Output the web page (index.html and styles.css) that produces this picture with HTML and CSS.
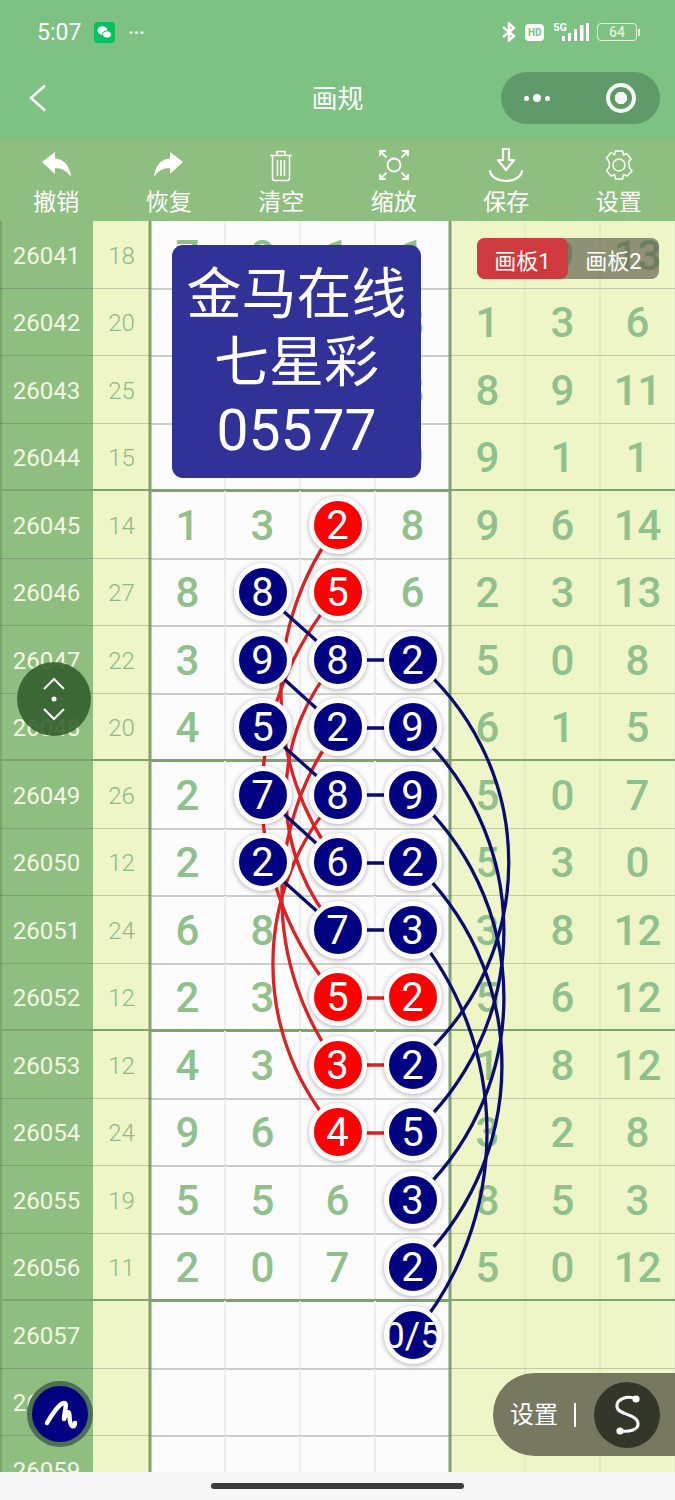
FILE: index.html
```html
<!DOCTYPE html>
<html lang="zh">
<head>
<meta charset="utf-8">
<title>画规</title>
<link rel="stylesheet" href="styles.css">
</head>
<body>
<div class="phone">
  <header class="status">
    <div class="status-left">
      <span class="time">5:07</span>
      <svg class="wechat" viewBox="0 0 21 21"><rect width="21" height="21" rx="4" fill="#07c160"/><ellipse cx="8.5" cy="8.5" rx="5" ry="4.2" fill="#fff"/><ellipse cx="13" cy="12.5" rx="4.4" ry="3.6" fill="#fff" stroke="#07c160"/></svg>
      <span class="more">···</span>
    </div>
    <div class="status-right">
      <svg class="bt" viewBox="0 0 16 20"><path d="M2 5 13 14 8 18.500V1.500L13 6 2 15" fill="none" stroke="#fff" stroke-width="2.400"/></svg>
      <span class="hd">HD</span>
      <span class="net"><span class="fiveg">5G</span>
        <svg class="bars" viewBox="0 0 27 20"><g fill="#fff"><rect x="0" y="14" width="3" height="5"/><rect x="6" y="11" width="3" height="8"/><rect x="12" y="7" width="3" height="12"/><rect x="18" y="3" width="3.500" height="16"/><rect x="24" y="1" width="3" height="18"/></g></svg>
      </span>
      <span class="battery"><span class="batt-body">64</span><span class="batt-tip"></span></span>
    </div>
  </header>
  <nav class="nav">
    <svg class="back" viewBox="0 0 18 28"><path d="M16 1.500 2 14l14 12.500" fill="none" stroke="#fff" stroke-width="2.600"/></svg>
    <h1 class="title">画规</h1>
    <div class="capsule">
      <span class="dots"><i class="dot"></i><i class="dot big"></i><i class="dot"></i></span>
      <span class="target"></span>
    </div>
  </nav>
  <div class="toolbar">
    <div class="tool">
      <svg class="ico" viewBox="0 0 36 36"><path d="M4 15 17 5v6.500C27 12 32 20 33 30c-4-6-9-9-16-9v6z" fill="#fff"/></svg>
      <span>撤销</span>
    </div>
    <div class="tool">
      <svg class="ico" viewBox="0 0 36 36"><path d="M32 15 19 5v6.500C9 12 4 20 3 30c4-6 9-9 16-9v6z" fill="#fff"/></svg>
      <span>恢复</span>
    </div>
    <div class="tool">
      <svg class="ico" viewBox="0 0 36 36"><g fill="none" stroke="#fff" stroke-width="1.500"><path d="M7 8.500h22M14 8V4.500h8V8"/><path d="M9.500 9v22c0 1.500 1 2.500 2.500 2.500h12c1.500 0 2.500-1 2.500-2.500V9"/><path d="M14.500 13v16M18 13v16M21.500 13v16"/></g></svg>
      <span>清空</span>
    </div>
    <div class="tool">
      <svg class="ico" viewBox="0 0 36 36"><g fill="none" stroke="#fff" stroke-width="1.800"><circle cx="18" cy="18" r="6.500"/><path d="M4 9V4h6M4.500 4.500l6 6M32 9V4h-6M31.500 4.500l-6 6M4 27v5h6M4.500 31.500l6-6M32 27v5h-6M31.500 31.500l-6-6"/></g></svg>
      <span>缩放</span>
    </div>
    <div class="tool">
      <svg class="ico ico-save" viewBox="0 0 36 36"><g fill="none" stroke="#fff" stroke-width="2.200" stroke-linejoin="round" stroke-linecap="round"><path d="M15 2h6v11h5L18 23 10 13h5z"/><path d="M2 24c1 6 8 10 16 10s15-4 16-10"/></g></svg>
      <span>保存</span>
    </div>
    <div class="tool">
      <svg class="ico" viewBox="0 0 36 36"><g fill="none" stroke="#fff" stroke-width="1.500" stroke-linejoin="round"><path d="M14.500 4h7l1 4 3-1.500 4.500 5.500-2.500 3 .5 3 .5 3 2.500 3L26 29l-3.500-1.500-1 4.500h-7l-1-4.500L10 29l-4.500-5.500 2.500-3 .5-3-.5-3L5.500 11 10 5.500 13.500 8z"/><circle cx="18" cy="18" r="6"/></g></svg>
      <span>设置</span>
    </div>
  </div>

  <main class="sheet">
    <div class="row"><div class="id">26041</div><div class="sum">18</div><div class="n">7</div><div class="n">8</div><div class="n">1</div><div class="n l4">1</div><div class="n r5">2</div><div class="n">9</div><div class="n">13</div></div>
    <div class="row"><div class="id">26042</div><div class="sum">20</div><div class="n">5</div><div class="n">2</div><div class="n">4</div><div class="n l4">8</div><div class="n r5">1</div><div class="n">3</div><div class="n">6</div></div>
    <div class="row"><div class="id">26043</div><div class="sum">25</div><div class="n">2</div><div class="n">3</div><div class="n">1</div><div class="n l4">8</div><div class="n r5">8</div><div class="n">9</div><div class="n">11</div></div>
    <div class="row thick"><div class="id">26044</div><div class="sum">15</div><div class="n">1</div><div class="n">2</div><div class="n">3</div><div class="n l4">9</div><div class="n r5">9</div><div class="n">1</div><div class="n">1</div></div>
    <div class="row"><div class="id">26045</div><div class="sum">14</div><div class="n">1</div><div class="n">3</div><div class="n"><b class="ball red">2</b></div><div class="n l4">8</div><div class="n r5">9</div><div class="n">6</div><div class="n">14</div></div>
    <div class="row"><div class="id">26046</div><div class="sum">27</div><div class="n">8</div><div class="n"><b class="ball">8</b></div><div class="n"><b class="ball red">5</b></div><div class="n l4">6</div><div class="n r5">2</div><div class="n">3</div><div class="n">13</div></div>
    <div class="row"><div class="id">26047</div><div class="sum">22</div><div class="n">3</div><div class="n"><b class="ball">9</b></div><div class="n"><b class="ball">8</b></div><div class="n l4"><b class="ball">2</b></div><div class="n r5">5</div><div class="n">0</div><div class="n">8</div></div>
    <div class="row thick"><div class="id">26048</div><div class="sum">20</div><div class="n">4</div><div class="n"><b class="ball">5</b></div><div class="n"><b class="ball">2</b></div><div class="n l4"><b class="ball">9</b></div><div class="n r5">6</div><div class="n">1</div><div class="n">5</div></div>
    <div class="row"><div class="id">26049</div><div class="sum">26</div><div class="n">2</div><div class="n"><b class="ball">7</b></div><div class="n"><b class="ball">8</b></div><div class="n l4"><b class="ball">9</b></div><div class="n r5">5</div><div class="n">0</div><div class="n">7</div></div>
    <div class="row"><div class="id">26050</div><div class="sum">12</div><div class="n">2</div><div class="n"><b class="ball">2</b></div><div class="n"><b class="ball">6</b></div><div class="n l4"><b class="ball">2</b></div><div class="n r5">5</div><div class="n">3</div><div class="n">0</div></div>
    <div class="row"><div class="id">26051</div><div class="sum">24</div><div class="n">6</div><div class="n">8</div><div class="n"><b class="ball">7</b></div><div class="n l4"><b class="ball">3</b></div><div class="n r5">3</div><div class="n">8</div><div class="n">12</div></div>
    <div class="row thick"><div class="id">26052</div><div class="sum">12</div><div class="n">2</div><div class="n">3</div><div class="n"><b class="ball red">5</b></div><div class="n l4"><b class="ball red">2</b></div><div class="n r5">5</div><div class="n">6</div><div class="n">12</div></div>
    <div class="row"><div class="id">26053</div><div class="sum">12</div><div class="n">4</div><div class="n">3</div><div class="n"><b class="ball red">3</b></div><div class="n l4"><b class="ball">2</b></div><div class="n r5">1</div><div class="n">8</div><div class="n">12</div></div>
    <div class="row"><div class="id">26054</div><div class="sum">24</div><div class="n">9</div><div class="n">6</div><div class="n"><b class="ball red">4</b></div><div class="n l4"><b class="ball">5</b></div><div class="n r5">3</div><div class="n">2</div><div class="n">8</div></div>
    <div class="row"><div class="id">26055</div><div class="sum">19</div><div class="n">5</div><div class="n">5</div><div class="n">6</div><div class="n l4"><b class="ball">3</b></div><div class="n r5">8</div><div class="n">5</div><div class="n">3</div></div>
    <div class="row thick"><div class="id">26056</div><div class="sum">11</div><div class="n">2</div><div class="n">0</div><div class="n">7</div><div class="n l4"><b class="ball">2</b></div><div class="n r5">5</div><div class="n">0</div><div class="n">12</div></div>
    <div class="row"><div class="id">26057</div><div class="sum"></div><div class="n"></div><div class="n"></div><div class="n"></div><div class="n l4"><b class="ball small">0/5</b></div><div class="n r5"></div><div class="n"></div><div class="n"></div></div>
    <div class="row"><div class="id">26058</div><div class="sum"></div><div class="n"></div><div class="n"></div><div class="n"></div><div class="n l4"></div><div class="n r5"></div><div class="n"></div><div class="n"></div></div>
    <div class="row"><div class="id">26059</div><div class="sum"></div><div class="n"></div><div class="n"></div><div class="n"></div><div class="n l4"></div><div class="n r5"></div><div class="n"></div><div class="n"></div></div>

    <svg class="links" viewBox="0 221 675 1251" width="675" height="1251">
      <g class="link-red">
        <path d="M338 525A279 279 0 0 0 338 863"/>
        <path d="M338 593A308 308 0 0 0 338 998"/>
        <path d="M338 660A201 201 0 0 0 338 930"/>
        <path d="M338 728A281 281 0 0 0 338 1065"/>
        <path d="M338 795A252 252 0 0 0 338 1133"/>
        <path d="M338 998H413M338 1065H413M338 1133H413"/>
      </g>
      <g class="link-navy">
        <path d="M413 660A262 262 0 0 1 413 1065"/>
        <path d="M413 728A271 271 0 0 1 413 1133"/>
        <path d="M413 795A271 271 0 0 1 413 1200"/>
        <path d="M413 863A275 275 0 0 1 413 1268"/>
        <path d="M413 930A314 314 0 0 1 413 1335"/>
        <path d="M263 593 338 660M263 660 338 728M263 728 338 795M263 795 338 863M263 863 338 930"/>
        <path d="M338 660H413M338 728H413M338 795H413M338 863H413M338 930H413"/>
      </g>
    </svg>

    <div class="banner">
      <div>金马在线</div>
      <div>七星彩</div>
      <div class="banner-num">05577</div>
    </div>
    <div class="boards"><span class="board active">画板1</span><span class="board">画板2</span></div>
    <div class="scroller">
      <svg viewBox="0 0 36 50" width="36" height="50"><g fill="none" stroke="#fff" stroke-width="2"><path d="M8 15 18 5l10 10M8 35l10 10 10-10"/></g><circle cx="18" cy="25" r="2.500" fill="#fff"/></svg>
    </div>
    <div class="brush">
      <svg viewBox="0 0 56 56" width="56" height="56"><path d="M15 37C20 28 28 17 32 17c4 0 0 9 0 16 2-6 4-8 5-6 1 3 0 11 3 13 2 1 3-1 3-3" fill="none" stroke="#fff" stroke-width="4.500" stroke-linecap="round" stroke-linejoin="round"/></svg>
    </div>
    <div class="pill">
      <span class="pill-label">设置</span>
      <i class="pill-bar"></i>
      <span class="pill-btn">
        <svg viewBox="0 0 40 50" width="40" height="50"><path d="M30 9C20 5 9 9 10 17c1 8 20 7 21 16 1 7-9 9-17 8" fill="none" stroke="#fff" stroke-width="3"/><circle cx="29" cy="9" r="3.600" fill="#fff"/><circle cx="13" cy="41" r="3.600" fill="#fff"/></svg>
      </span>
    </div>
  </main>

  <footer class="home"><i class="home-bar"></i></footer>
</div>
</body>
</html>
```
FILE: styles.css
```css
* { box-sizing: border-box; }
html, body { margin: 0; padding: 0; }
body {
  width: 675px;
  height: 1500px;
  overflow: hidden;
  font-family: Roboto, "Noto Sans CJK SC", sans-serif;
  background: #f6f6f6;
}
.phone { display: flex; flex-direction: column; height: 1500px; }

/* status bar */
.status {
  height: 68px;
  flex: none;
  background: #7dc183;
  color: #fff;
  display: flex;
  justify-content: space-between;
  align-items: center;
  padding: 0 35px 4px 37px;
}
.status-left { display: flex; align-items: center; gap: 13px; }
.time { font-size: 23px; }
.wechat { width: 21px; height: 21px; }
.more { font-size: 18px; font-weight: 700; letter-spacing: 0; }
.status-right { display: flex; align-items: center; }
.bt { width: 16px; height: 20px; margin-right: 8px; }
.hd {
  width: 19px; height: 17px;
  background: #fff; color: #7dc183;
  border-radius: 4px;
  font-size: 10px; font-weight: 700;
  display: flex; align-items: center; justify-content: center;
  margin-right: 9px;
}
.net { display: flex; align-items: flex-end; position: relative; margin-right: 8px; }
.fiveg { font-size: 11px; font-weight: 700; margin-right: -5px; align-self: flex-start; line-height: 11px; }
.bars { width: 27px; height: 20px; }
.battery { display: flex; align-items: center; }
.batt-body {
  width: 40px; height: 18px;
  border: 1.500px solid #e3efd8;
  border-radius: 4px;
  color: #e3efd8;
  font-size: 14px; font-weight: 500;
  display: flex; align-items: center; justify-content: center;
  line-height: 1;
}
.batt-tip { width: 2px; height: 7px; background: #e3efd8; margin-left: 1px; }

/* nav */
.nav {
  height: 69px;
  flex: none;
  background: #7dc183;
  display: grid;
  grid-template-columns: 1fr auto 1fr;
  align-items: center;
  padding: 0 15px 9px 15px;
}
.back { width: 18px; height: 28px; margin-left: 14px; }
.title { margin: -3px 0 0; font-size: 26px; font-weight: 400; color: #fff; line-height: 1; font-family: "Noto Sans CJK SC", sans-serif; }
.capsule {
  justify-self: end;
  width: 159px; height: 52px;
  border-radius: 26px;
  background: #5f9b68;
  display: flex; align-items: center; justify-content: space-between;
  padding: 0 24px 0 23px;
}
.dots { display: flex; align-items: center; gap: 4px; }
.dot { width: 5px; height: 5px; border-radius: 50%; background: #fff; }
.dot.big { width: 8px; height: 8px; }
.target {
  width: 30px; height: 30px;
  border-radius: 50%;
  border: 4px solid #f4f8f0;
  display: flex; align-items: center; justify-content: center;
  background: radial-gradient(circle, #f4f8f0 0 6px, transparent 6.500px);
}

/* toolbar */
.toolbar {
  height: 84px;
  flex: none;
  background: #8fbf80;
  display: grid;
  grid-template-columns: repeat(6, 1fr);
  box-shadow: inset 0 1px 0 #86ba7f;
}
.tool {
  display: flex; flex-direction: column; align-items: center;
  padding-top: 10px;
  color: #fff;
  font-size: 23px; line-height: 30px;
  font-family: "Noto Sans CJK SC", sans-serif;
}
.tool span { margin-top: 2px; }
.ico { width: 36px; height: 36px; display: block; }

/* sheet */
.sheet {
  height: 1251px;
  flex: none;
  position: relative;
  overflow: hidden;
  background: #fcfcfc;
}
.row {
  height: 67.500px;
  display: grid;
  grid-template-columns: 93px 57px repeat(7, 75px);
  position: relative;
}
.row::after {
  content: "";
  position: absolute;
  left: 0; right: 0; bottom: -1px;
  height: 2px;
  background: rgba(90, 100, 80, .3);
}
.row.thick::after { height: 3px; bottom: -1px; background: #7ea36d; }
.id {
  background: #8fbf80;
  color: #f2f9e6;
  font-size: 24px;
  padding-top: 2px;
  display: flex; align-items: center; justify-content: center;
  box-shadow: inset 2px 0 0 #7ea36d;
}
.sum {
  background: #eef6c8;
  color: #8fb884;
  font-size: 24px; font-weight: 300;
  padding-top: 2px;
  display: flex; align-items: center; justify-content: center;
  box-shadow: inset -1.500px 0 0 #7ea36d;
}
.n {
  color: #90c08c;
  font-size: 42px; font-weight: 500;
  line-height: 1;
  padding-top: 2px;
  display: flex; align-items: center; justify-content: center;
  box-shadow: inset -1px 0 0 #eeeeee, inset 1px 0 0 #eeeeee;
}
.sum + .n { box-shadow: inset 1.500px 0 0 #7ea36d, inset -1px 0 0 #eeeeee; }
.n.l4 { box-shadow: inset -1.500px 0 0 #7ea36d, inset 1px 0 0 #eeeeee; }
.n.r5 { box-shadow: inset 1.500px 0 0 #7ea36d, inset -1px 0 0 #e4ecc2; background: #eef6c8; }
.n.r5 ~ .n { background: #eef6c8; box-shadow: inset -1px 0 0 #e4ecc2, inset 1px 0 0 #e4ecc2; }
.ball {
  width: 58px; height: 58px;
  margin-top: -2px;
  padding-top: 2px;
  border: 5px solid #fff;
  border-radius: 50%;
  background: #000080;
  color: #fff;
  font-size: 40px; font-weight: 400;
  overflow: hidden;
  white-space: nowrap;
  display: flex; align-items: center; justify-content: center;
  box-shadow: 0 1px 5px rgba(0, 0, 0, .32);
  position: relative;
  z-index: 2;
}
.ball.red { background: #ff0000; }
.ball.small { font-size: 37px; }

.links { position: absolute; left: 0; top: 0; z-index: 1; }
.links g { fill: none; stroke-width: 3.300px; }
.link-red { stroke: #dc2222; }
.link-navy { stroke: #0a0d70; }

.banner {
  position: absolute;
  left: 172px; top: 24px;
  width: 249px; height: 233px;
  background: #303298;
  border-radius: 11px;
  color: #fff;
  font-size: 55px;
  line-height: 67.500px;
  text-align: center;
  padding-top: 11px;
  font-family: "Noto Sans CJK SC", sans-serif;
  z-index: 3;
}
.banner-num { font-size: 57px; font-family: Roboto, sans-serif; margin-top: 6px; }
.boards {
  position: absolute;
  left: 477px; top: 17px;
  width: 182px; height: 41px;
  border-radius: 8px;
  background: rgba(90, 90, 70, .65);
  display: flex;
  z-index: 3;
}
.board {
  flex: 1;
  color: #fff;
  font-size: 22px;
  display: flex; align-items: center; justify-content: center;
  font-family: Roboto, "Noto Sans CJK SC", sans-serif;
}
.board.active { background: #cf3a3e; border-radius: 8px; }
.scroller {
  position: absolute;
  left: 17px; top: 441px;
  width: 74px; height: 74px;
  border-radius: 50%;
  background: rgba(48, 92, 42, .88);
  display: flex; align-items: center; justify-content: center;
  z-index: 4;
}
.brush {
  position: absolute;
  left: 27px; top: 1160px;
  width: 66px; height: 66px;
  border-radius: 50%;
  border: 5px solid #4d6f53;
  background: #000080;
  display: flex; align-items: center; justify-content: center;
  z-index: 4;
}
.pill {
  position: absolute;
  left: 493px; top: 1152px;
  width: 182px; height: 83px;
  border-radius: 42px 0 0 42px;
  background: #767860;
  display: flex; align-items: center;
  padding-left: 17px;
  z-index: 4;
  color: #fff;
  font-size: 24px;
  line-height: 1;
  font-family: "Noto Sans CJK SC", sans-serif;
}
.pill-label { margin-top: -4px; }
.pill-bar { width: 2px; height: 24px; background: #fff; margin-left: 16px; }
.pill-btn {
  width: 66px; height: 66px;
  border-radius: 50%;
  background: #33372a;
  margin-left: 18px;
  display: flex; align-items: center; justify-content: center;
}

/* home indicator */
.home {
  height: 28px;
  flex: none;
  background: #f6f6f6;
  display: flex; align-items: center; justify-content: center;
}
.home-bar { width: 253px; height: 6px; border-radius: 3px; background: #3c3c3c; }
```
